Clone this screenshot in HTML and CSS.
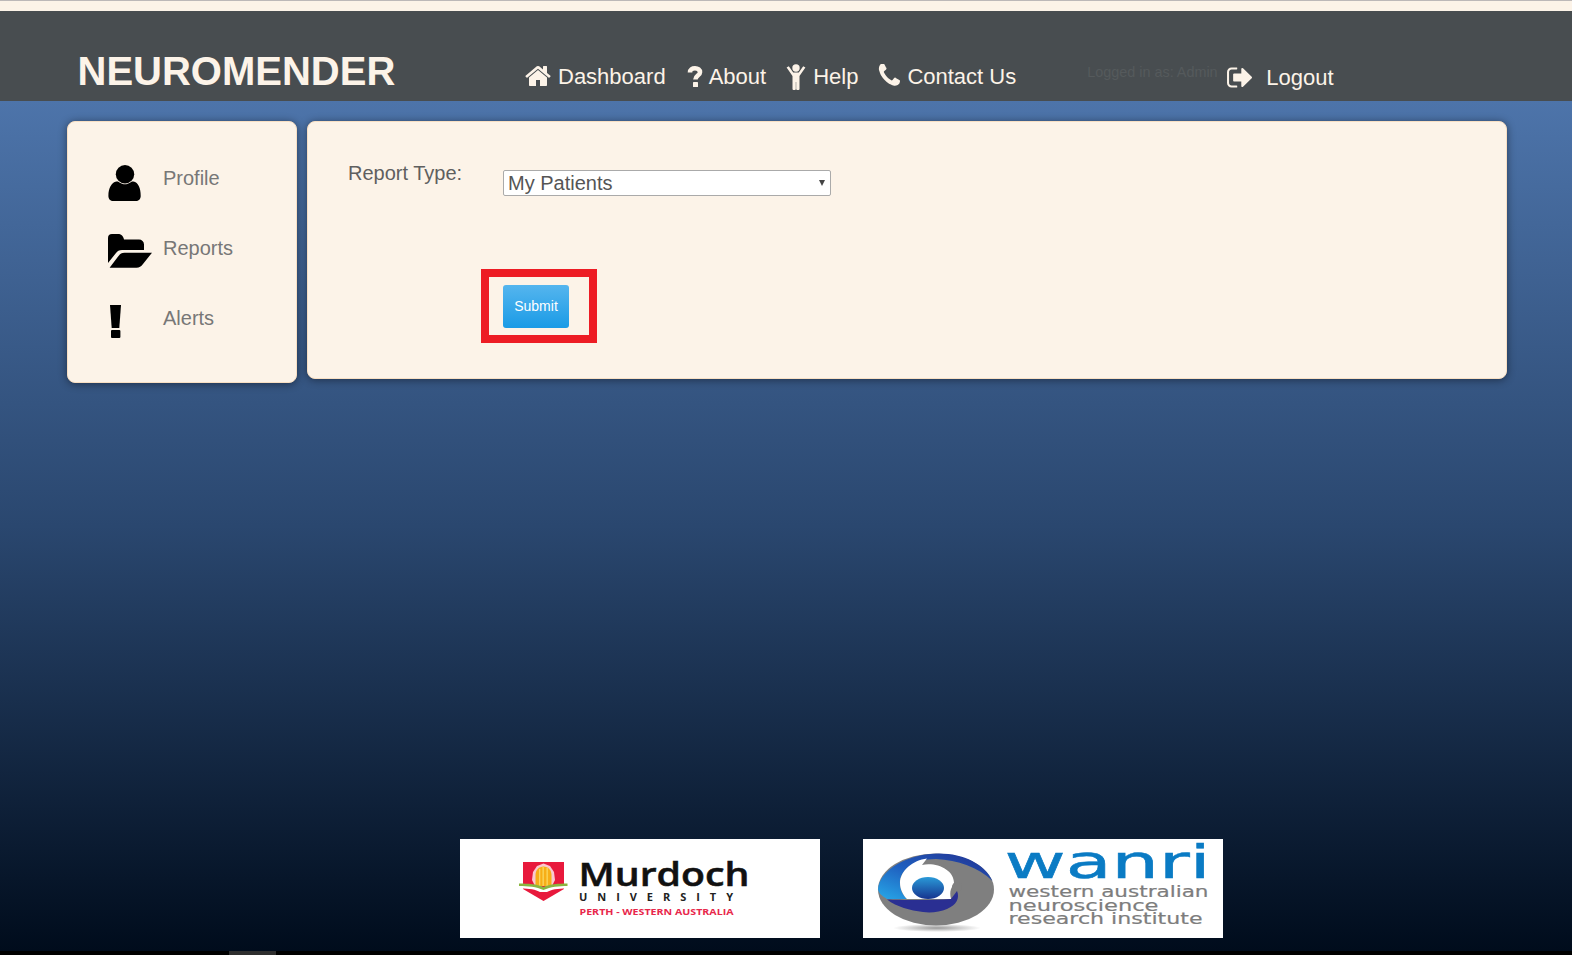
FILE: index.html
```html
<!DOCTYPE html>
<html lang="en">
<head>
<meta charset="utf-8">
<title>Neuromender</title>
<link rel="stylesheet" href="styles.css">
</head>
<body>
<div class="page">
  <header class="header">
    <div class="brand">NEUROMENDER</div>
    <nav class="nav">
      <a class="nav-item">
        <svg class="ic-home" viewBox="0 0 1792 1792"><path d="M1472 992v480q0 26-19 45t-45 19h-384v-384h-256v384h-384q-26 0-45-19t-19-45v-480q0-1 .5-3t.5-3l575-474 575 474q1 2 1 6zm223-69l-62 74q-8 9-21 11h-3q-13 0-21-7l-692-577-692 577q-12 8-24 7-13-2-21-11l-62-74q-8-10-7-23.500t11-21.500l719-599q32-26 76-26t76 26l244 204v-195q0-14 9-23t23-9h192q14 0 23 9t9 23v408l219 182q10 8 11 21.500t-7 23.500z"/></svg>
        <span>Dashboard</span>
      </a>
      <a class="nav-item">
        <svg class="ic-about" viewBox="0 0 16 21"><path class="q-stroke" d="M3 6.500C3 3.500 5.200 2.300 8 2.300c3 0 5 1.500 5 3.900 0 3.300-4.600 3.500-4.600 7.200"/><rect x="6" y="16" width="5" height="5" rx=".6"/></svg>
        <span>About</span>
      </a>
      <a class="nav-item">
        <svg class="ic-help" viewBox="0 0 20 26"><circle cx="10" cy="4" r="3.700"/><path d="M.6 3.500 2.800 2.200 7.200 8.500h5.600l4.400-6.300 2.200 1.300-5.900 8.400V25a1 1 0 0 1-1 1h-1.300a1 1 0 0 1-1-1v-7h-.4v7a1 1 0 0 1-1 1H7.500a1 1 0 0 1-1-1V11.900z"/></svg>
        <span>Help</span>
      </a>
      <a class="nav-item">
        <svg class="ic-phone" viewBox="0 180 1600 1500" preserveAspectRatio="none"><path d="M1600 1240q0 27-10 70.500t-21 68.500q-21 50-122 106-94 51-186 51-27 0-53-3.500t-57.500-12.500-47-14.500-55.500-20.500-49-18q-98-35-175-83-127-79-264-216t-216-264q-48-77-83-175-3-9-18-49t-20.500-55.500-14.500-47-12.500-57.500-3.500-53q0-92 51-186 56-101 106-122 25-11 68.500-21t70.500-10q14 0 21 3 18 6 53 76 11 19 30 54t35 63.500 31 53.500q3 4 17.500 25t21.500 35.500 7 28.500q0 20-28.500 50t-62 55-62 53-28.500 46q0 9 5 22.500t8.500 20.500 14 24 11.500 19q76 137 174 235t235 174q2 1 19 11.500t24 14 20.500 8.500 22.500 5q18 0 46-28.500t53-62 55-62 50-28.500q14 0 28.500 7t35.500 21.500 25 17.500q25 15 53.500 31t63.500 35 54 30q70 35 76 53 3 7 3 21z"/></svg>
        <span>Contact Us</span>
      </a>
    </nav>
    <div class="logged">Logged in as: Admin</div>
    <a class="logout">
      <svg class="ic-logout" viewBox="0 230 1632 1332" preserveAspectRatio="none"><path d="M704 1440q0 4 1 20t.5 26.500-3 23.500-10 19.500-20.500 6.500h-320q-119 0-203.500-84.500t-84.500-203.500v-704q0-119 84.500-203.500t203.500-84.500h320q13 0 22.500 9.500t9.500 22.500q0 4 1 20t.5 26.500-3 23.500-10 19.500-20.500 6.500h-320q-66 0-113 47t-47 113v704q0 66 47 113t113 47h312l11.500 1 11.500 3 8 5.500 7 9 2 13.500zm928-544q0 26-19 45l-544 544q-19 19-45 19t-45-19-19-45v-288h-448q-26 0-45-19t-19-45v-384q0-26 19-45t45-19h448v-288q0-26 19-45t45-19 45 19l544 544q19 19 19 45z"/></svg>
      <span>Logout</span>
    </a>
  </header>

  <main class="main">
    <div class="cards">
      <aside class="card sidebar">
        <a class="side-item">
          <svg class="side-icon" viewBox="0 0 44 38"><path d="M.4 32c0-8 3-13.500 8-14.500 1.500-.3 2.500.5 4 1.500 1.400.8 3 1.300 4.500 1.300s3.100-.5 4.500-1.300c1.500-1 2.500-1.800 4-1.500 5 1 7.300 6.500 7.300 14.500 0 3-2 5-5 5H5.400c-3 0-5-2-5-5z"/><circle cx="17" cy="10.200" r="9.200"/></svg>
          <span>Profile</span>
        </a>
        <a class="side-item">
          <svg class="side-icon" viewBox="0 0 44 38"><path d="M0 4a4 4 0 0 1 4-4h6c3 0 5 1.500 6 5.500h15a5 5 0 0 1 5 5V16H14c-3 0-4.500 1-6 3L0 29z"/><path d="M1.600 33.800 10.500 22c1.800-2.300 3-3.300 6-3.300H44L35 30c-2 2.600-3.600 3.800-6.500 3.800z"/></svg>
          <span>Reports</span>
        </a>
        <a class="side-item">
          <svg class="side-icon" viewBox="0 0 44 38"><path d="M2 1h11l-1.700 23H3.700z"/><rect x="3" y="26" width="9.400" height="8" rx="1"/></svg>
          <span>Alerts</span>
        </a>
      </aside>

      <section class="card content">
        <div class="form-row">
          <label class="form-label" for="report-type">Report Type:</label>
          <div class="select-wrap">
            <select class="form-select" id="report-type">
              <option>My Patients</option>
            </select>
          </div>
        </div>
        <div class="highlight">
          <button class="submit" type="button">Submit</button>
        </div>
      </section>
    </div>

    <div class="logos">
      <div class="logo">
        <svg class="logo-art" viewBox="0 0 360 99">
          <path fill="#e8193c" d="M63 23h41v27L83.500 62 63 50z"/>
          <path fill="#f9c9d0" d="M83.500 24.500 90 27l4 6 1 8-3 6H75l-3-6 1-8 4-6z"/>
          <path fill="#f7ae17" d="M75.500 47V36c0-5 3.500-8.500 8-8.500s8 3.500 8 8.500v11z"/>
          <path fill="#fad75f" d="M79 30h1.300v17H79zm3.500-2h1.300v19h-1.300zm4 1h1.300v18h-1.300z"/>
          <path fill="#fff" d="M61 45.500c9 0 17 .5 22.500 3 5.500-2.500 14-3 22.500-3v4c-8 0-15 1-19 3.500h-7c-4-2.500-11-3.500-19-3.500z"/>
          <path fill="#8ab53f" d="M59 44.500c9 0 18 .6 24.500 3.500 6.500-2.900 15-3.500 24-3.500v2.500c-8.500 0-17 .8-24 4-7-3.200-15.500-4-24.500-4z"/>
          <text class="m-name" x="118.500" y="47" textLength="171" lengthAdjust="spacingAndGlyphs">Murdoch</text>
          <text class="m-uni" x="119" y="62" textLength="154" lengthAdjust="spacing">UNIVERSITY</text>
          <text class="m-loc" x="119.500" y="75.500" textLength="154" lengthAdjust="spacingAndGlyphs">PERTH - WESTERN AUSTRALIA</text>
        </svg>
      </div>
      <div class="logo">
        <svg class="logo-art" viewBox="0 0 360 99">
          <defs>
            <linearGradient id="swirl-blue" x1="0" y1="1" x2="1" y2="0">
              <stop offset="0" stop-color="#27a8e8"/>
              <stop offset=".45" stop-color="#1f5fbf"/>
              <stop offset="1" stop-color="#232f8f"/>
            </linearGradient>
            <linearGradient id="swirl-eye" x1="0" y1="0" x2="0" y2="1">
              <stop offset="0" stop-color="#2a9ad8"/>
              <stop offset="1" stop-color="#16348f"/>
            </linearGradient>
            <radialGradient id="swirl-shadow">
              <stop offset="0" stop-color="#9a9a9a"/>
              <stop offset="1" stop-color="#fff"/>
            </radialGradient>
          </defs>
          <ellipse cx="74" cy="89" rx="44" ry="4" fill="url(#swirl-shadow)"/>
          <ellipse cx="73" cy="50.500" rx="58" ry="36" fill="#7f7f7f"/>
          <path fill="url(#swirl-blue)" d="M15 50C17 30 46 14.500 76 14.500c25 0 46 11 53.500 27.500C115 28 95 21 73 20 50 20 36 32 37 45c.5 7 3 11 7 15H24C19 57 15.500 54 15 50z"/>
          <path fill="#fff" d="M37 44C37 32 50 21 64 19.500L59 26c15-3 32 5 32 18-1 2-2 4-3 6-1 3-1 6 0 10H44C40 56 37 50 37 44z"/>
          <circle cx="94" cy="48" r="5" fill="#7f7f7f"/>
          <path fill="#2a2f92" d="M24 60.500c14 .5 44 1 64 -.5l6 -8c3 7-.5 14-10 18-7 3-16 4-24 3-13-1.500-26-5-36-12.500z"/>
          <ellipse cx="65" cy="49" rx="16" ry="11" fill="url(#swirl-eye)"/>
          <text class="w-name" x="141.500" y="39" textLength="206" lengthAdjust="spacingAndGlyphs">wanri</text>
          <text class="w-sub" x="145.500" y="58" textLength="200" lengthAdjust="spacingAndGlyphs">western australian</text>
          <text class="w-sub" x="145.500" y="71.500" textLength="150" lengthAdjust="spacingAndGlyphs">neuroscience</text>
          <text class="w-sub" x="145.500" y="85" textLength="194" lengthAdjust="spacingAndGlyphs">research institute</text>
        </svg>
      </div>
    </div>
  </main>
  <div class="strip"><span class="strip-bit"></span></div>
</div>
</body>
</html>
```
FILE: styles.css
```css
* { box-sizing: border-box; }

html, body {
  margin: 0;
  padding: 0;
  background: #fff;
}

body {
  font-family: "Liberation Sans", Arial, sans-serif;
}

.page {
  width: 1572px;
  height: 955px;
  display: flex;
  flex-direction: column;
  background: #fcf3e8;
  border-top: 1px solid #bcb8b8;
  padding-top: 10px;
  overflow: hidden;
}

/* Header */
.header {
  flex: 0 0 90px;
  display: flex;
  align-items: flex-start;
  background: #484d50;
  color: #fcf3e8;
  padding-left: 77.500px;
}

.brand {
  width: 316px;
  margin-top: 37px;
  font-size: 40px;
  line-height: 46px;
  font-weight: 700;
  white-space: nowrap;
}

.nav {
  display: flex;
  align-items: flex-start;
  gap: 21px;
  margin-left: 129.500px;
  margin-top: 53px;
  font-size: 22px;
  line-height: 26px;
}

.nav-item {
  display: flex;
  align-items: flex-start;
  gap: 7px;
  white-space: nowrap;
}

.nav-item svg, .logout svg {
  display: block;
  fill: #fcf3e8;
  flex: none;
}

.ic-home { width: 28px; height: 28px; margin-top: -2px; margin-left: 1px; margin-right: -1px; }
.ic-about { width: 16px; height: 21px; margin-top: 2px; margin-right: -1px; }
.ic-help { width: 20px; height: 26px; margin-top: 0; margin-left: -1px; }
.ic-phone { width: 24px; height: 24px; margin-top: 0; margin-left: -3px; }

.q-stroke {
  fill: none;
  stroke: #fcf3e8;
  stroke-width: 4.600;
}

.logged {
  width: 129px;
  margin-left: 71px;
  margin-top: 53px;
  font-size: 14.400px;
  line-height: 16px;
  color: #555a5c;
  white-space: nowrap;
}

.logout {
  display: flex;
  align-items: flex-start;
  gap: 14px;
  margin-left: 10px;
  margin-top: 54px;
  font-size: 22px;
  line-height: 26px;
}

.ic-logout { width: 26px; height: 21px; margin-top: 2px; }

/* Main area */
.main {
  flex: 1;
  display: flex;
  flex-direction: column;
  padding: 20px 65px 13px 67px;
  background: linear-gradient(180deg, #4d74aa 0%, #2a476f 50%, #000c1c 100%);
}

.cards {
  display: flex;
  align-items: flex-start;
  gap: 10px;
}

.card {
  background: #fcf3e8;
  border-radius: 8px;
  border: 1px solid #f8dfc3;
  box-shadow: 0 1px 8px rgba(0, 0, 0, .45);
}

/* Sidebar */
.sidebar {
  flex: 0 0 230px;
  height: 262px;
  padding: 42px 0 0 40px;
  display: flex;
  flex-direction: column;
}

.side-item {
  display: flex;
  align-items: flex-start;
  height: 70px;
  font-size: 20px;
  line-height: 24px;
  color: #777;
}

.side-item span {
  margin-left: 11px;
  padding-top: 2px;
}

.side-icon {
  display: block;
  flex: none;
  width: 44px;
  height: 38px;
  fill: #000;
}

/* Form */
.content {
  flex: 0 0 1200px;
  height: 258px;
  padding: 39px 0 0 40px;
}

.form-row {
  display: flex;
  align-items: flex-start;
}

.form-label {
  flex: 0 0 155px;
  font-size: 20px;
  line-height: 24px;
  color: #5f5f5f;
}

.select-wrap {
  position: relative;
  margin-top: 9px;
}

.select-wrap::after {
  content: "";
  position: absolute;
  right: 6px;
  top: 10px;
  border-left: 3px solid transparent;
  border-right: 3px solid transparent;
  border-top: 6px solid #444;
  pointer-events: none;
}

.form-select {
  display: block;
  width: 328px;
  height: 26px;
  padding: 0 0 0 4px;
  appearance: none;
  -webkit-appearance: none;
  font-family: "Liberation Sans", Arial, sans-serif;
  font-size: 20px;
  color: #555;
  background-color: #fff;
  border: 1px solid #aaa;
  border-radius: 2px;
}

.highlight {
  display: inline-flex;
  margin: 73px 0 0 133px;
  padding: 8px 20px 7px 14px;
  border: 8px solid #ed1c24;
}

.submit {
  display: block;
  width: 66px;
  height: 43px;
  padding: 0 0 2px;
  font-family: "Liberation Sans", Arial, sans-serif;
  font-size: 14px;
  color: #fff;
  border: 0;
  border-radius: 3px;
  background: linear-gradient(180deg, #55b5ee 0%, #1a9be6 100%);
}

/* Logos */
.logos {
  margin-top: auto;
  margin-left: 393px;
  display: flex;
  gap: 43px;
}

.logo {
  flex: 0 0 360px;
  height: 99px;
  background: #fff;
}

.logo-art {
  display: block;
  width: 360px;
  height: 99px;
  overflow: visible;
}

.m-name {
  font-family: "Open Sans", sans-serif;
  font-size: 32px;
  font-weight: 600;
  fill: #111;
  stroke: #111;
  stroke-width: .5;
}

.m-uni {
  font-family: "Open Sans", sans-serif;
  font-size: 11px;
  font-weight: 700;
  fill: #222;
}

.m-loc {
  font-family: "Open Sans", sans-serif;
  font-size: 8.500px;
  font-weight: 700;
  fill: #e8274b;
}

.w-name {
  font-family: "DejaVu Sans", sans-serif;
  font-size: 46px;
  fill: #0a7bc4;
  stroke: #0a7bc4;
  stroke-width: .5;
}

.w-sub {
  font-family: "DejaVu Sans", sans-serif;
  font-size: 16px;
  fill: #7d7d7d;
  stroke: #7d7d7d;
  stroke-width: .2;
}

/* Bottom strip */
.strip {
  flex: 0 0 4px;
  background: #000;
  padding-left: 229px;
}

.strip-bit {
  display: block;
  width: 47px;
  height: 4px;
  background: #2e2e2e;
}
```
